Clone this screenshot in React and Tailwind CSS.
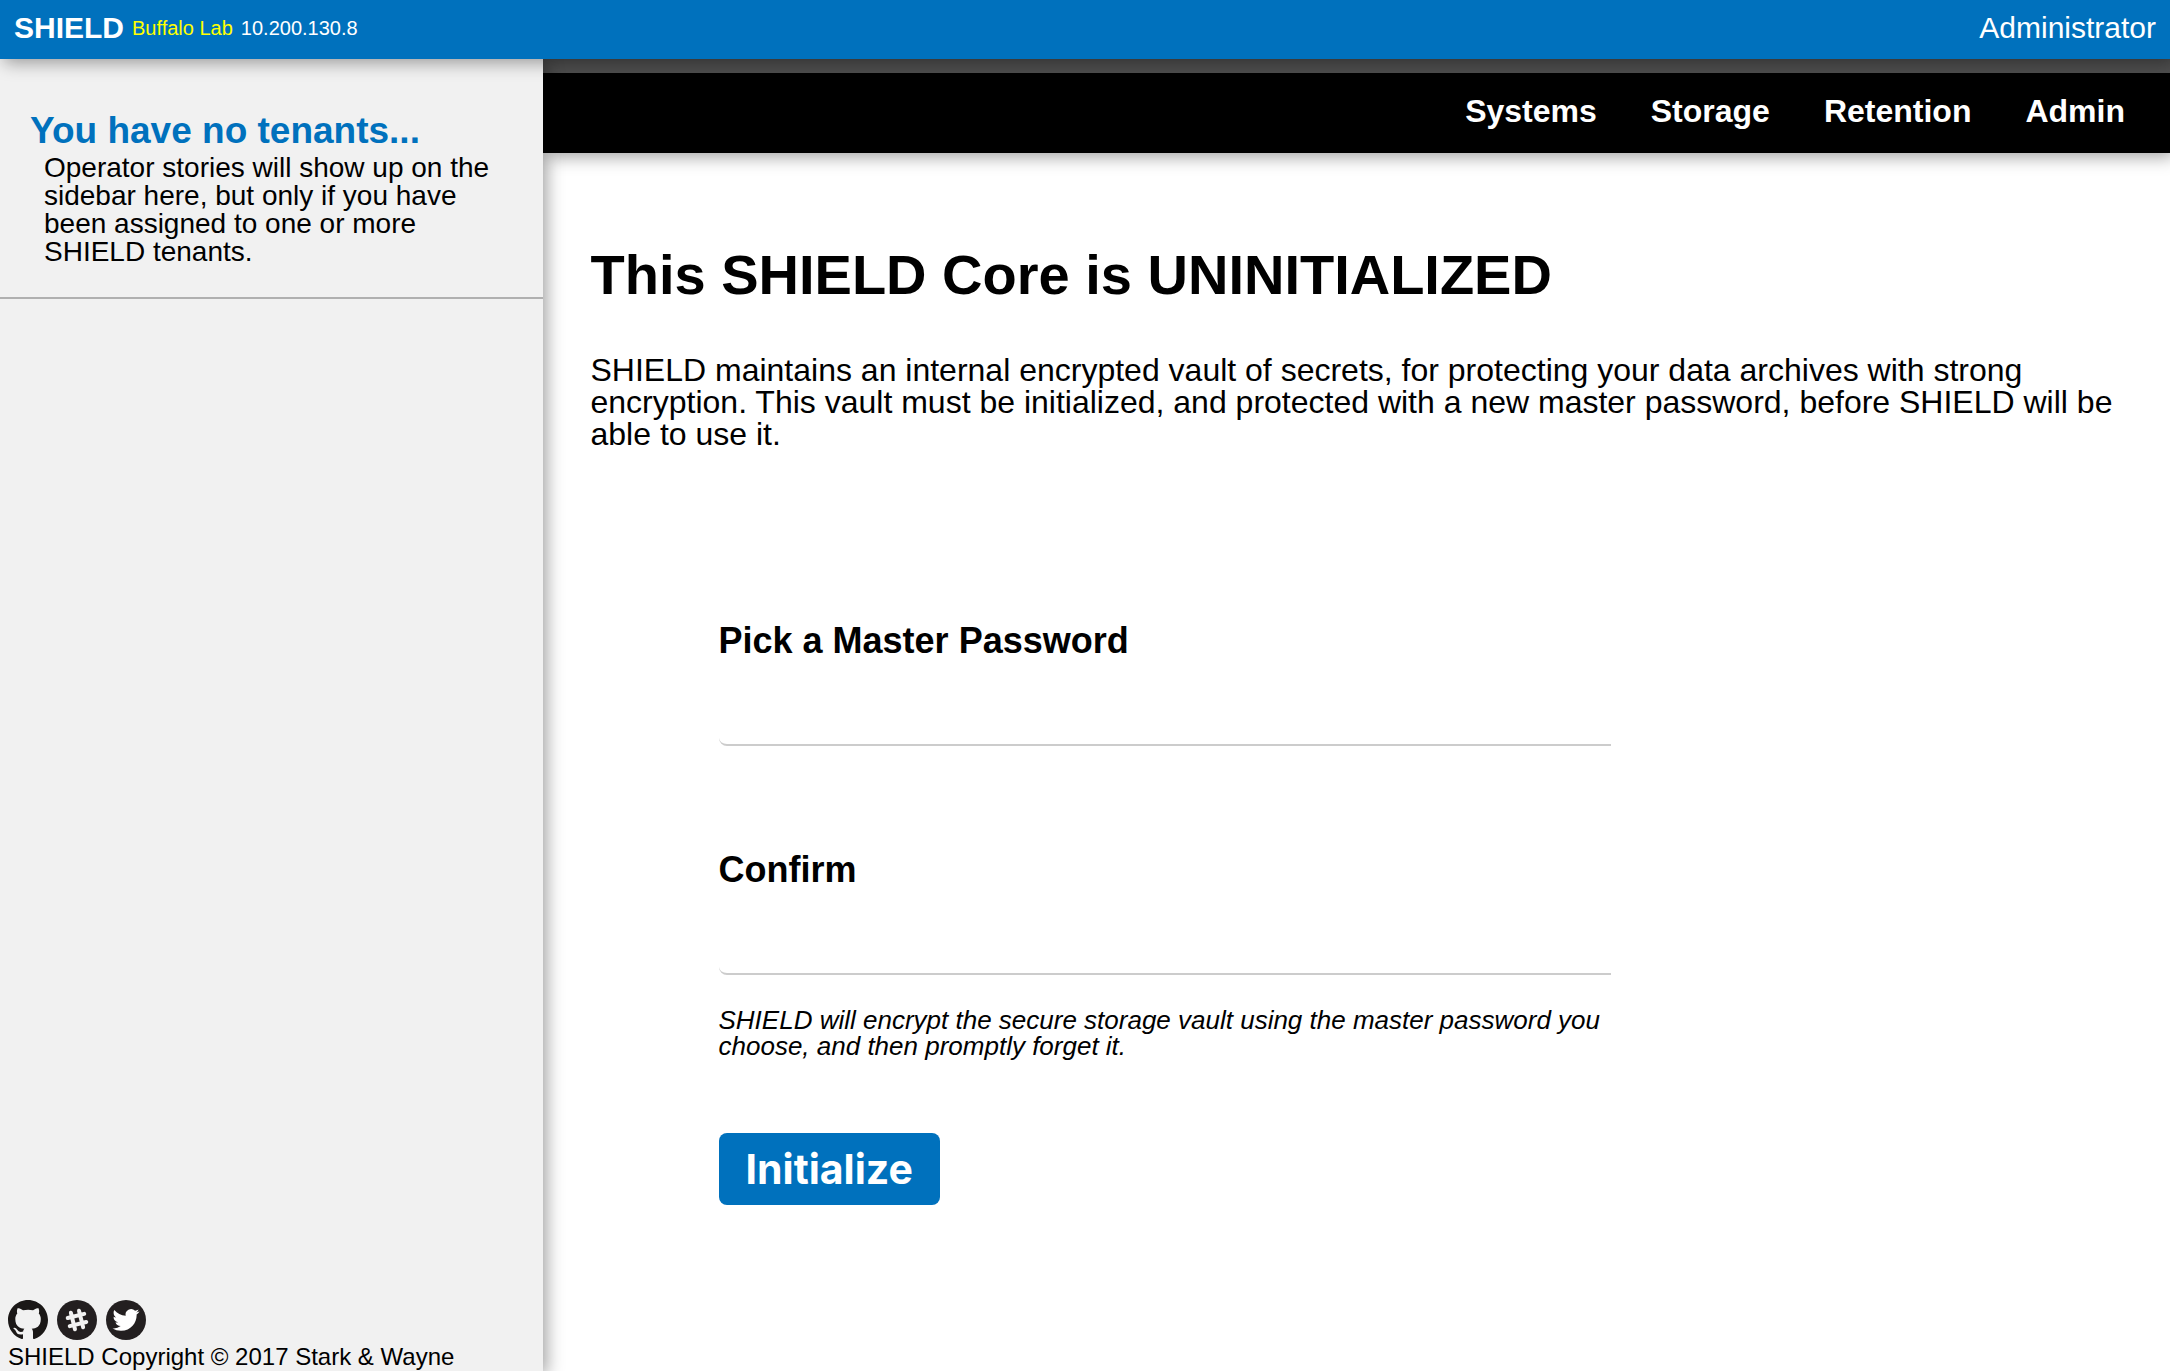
const NAV = ["Systems", "Storage", "Retention", "Admin"];

function GithubIcon() {
  return (
    <svg viewBox="0 0 16 16" className="size-10" aria-hidden="true">
      <path
        fill="#1b1817"
        d="M8 0C3.58 0 0 3.58 0 8c0 3.54 2.29 6.53 5.47 7.59.4.07.55-.17.55-.38 0-.19-.01-.82-.01-1.49-2.01.37-2.53-.49-2.69-.94-.09-.23-.48-.94-.82-1.13-.28-.15-.68-.52-.01-.53.63-.01 1.08.58 1.23.82.72 1.21 1.87.87 2.33.66.07-.52.28-.87.51-1.07-1.78-.2-3.64-.89-3.64-3.95 0-.87.31-1.59.82-2.15-.08-.2-.36-1.02.08-2.12 0 0 .67-.21 2.2.82a7.6 7.6 0 0 1 4 0c1.53-1.04 2.2-.82 2.2-.82.44 1.1.16 1.92.08 2.12.51.56.82 1.27.82 2.15 0 3.07-1.87 3.75-3.65 3.95.29.25.54.73.54 1.48 0 1.07-.01 1.93-.01 2.2 0 .21.15.46.55.38A8.01 8.01 0 0 0 16 8c0-4.42-3.58-8-8-8z"
      />
    </svg>
  );
}

function SlackIcon() {
  return (
    <svg viewBox="0 0 40 40" className="size-10" aria-hidden="true">
      <circle cx="20" cy="20" r="20" fill="#231f20" />
      <g transform="rotate(-14 20 20)" stroke="#f1f1f1" strokeWidth="4" strokeLinecap="round">
        <path d="M15.8 11.5v17M24.2 11.5v17M11.5 15.8h17M11.5 24.2h17" />
      </g>
    </svg>
  );
}

function TwitterIcon() {
  return (
    <svg viewBox="0 0 40 40" className="size-10" aria-hidden="true">
      <circle cx="20" cy="20" r="20" fill="#231f20" />
      <path
        transform="translate(6.5 6.5) scale(1.12)"
        fill="#fff"
        d="M23.953 4.57a10 10 0 01-2.825.775 4.958 4.958 0 002.163-2.723c-.951.555-2.005.959-3.127 1.184a4.92 4.92 0 00-8.384 4.482C7.69 8.095 4.067 6.13 1.64 3.162a4.822 4.822 0 00-.666 2.475c0 1.71.87 3.213 2.188 4.096a4.904 4.904 0 01-2.228-.616v.06a4.923 4.923 0 003.946 4.827 4.996 4.996 0 01-2.212.085 4.936 4.936 0 004.604 3.417 9.867 9.867 0 01-6.102 2.105c-.39 0-.779-.023-1.17-.067a13.995 13.995 0 007.557 2.209c9.053 0 13.998-7.496 13.998-13.985 0-.21 0-.42-.015-.63A9.935 9.935 0 0024 4.59z"
      />
    </svg>
  );
}

function Field({ id, label, children }) {
  return (
    <div>
      <label htmlFor={id} className="block text-[36px]/[36px] font-bold">
        {label}
      </label>
      <input
        id={id}
        type="password"
        className="mt-5 block h-[67px] w-full rounded-bl-lg border-b-2 border-[#ccc] bg-transparent px-2 text-[32px] outline-none"
      />
      {children}
    </div>
  );
}

export default function App() {
  return (
    <div className="flex min-h-screen flex-col bg-white font-['Liberation_Sans',Arial,sans-serif] text-black">
      <header className="relative z-20 flex h-[59px] items-center justify-between bg-[#0071bd] px-3.5 pb-1 text-white shadow-[4px_4px_16px_rgba(0,0,0,0.36)]">
        <div className="flex items-center gap-2 text-[20px]/[20px]">
          <strong className="text-[30px]/[30px]">SHIELD</strong>
          <span className="text-[#ff0]">Buffalo Lab</span>
          <span>10.200.130.8</span>
        </div>
        <a href="#account" className="text-[30px]/[30px]">
          Administrator
        </a>
      </header>

      <div className="flex flex-1">
        <aside className="relative z-10 flex w-1/4 shrink-0 flex-col justify-between bg-[#f1f1f1] shadow-[4px_4px_16px_rgba(0,0,0,0.36)]">
          <section className="border-b-2 border-[#b0b0b0] pt-[53px] pr-10 pb-[31px] pl-[30px]">
            <h2 className="text-[37px]/[37px] font-bold text-[#0071bd]">You have no tenants...</h2>
            <p className="pt-[5px] pl-3.5 text-[28px]/[28px]">
              Operator stories will show up on the sidebar here, but only if you have been assigned to one or more
              SHIELD tenants.
            </p>
          </section>
          <footer className="px-2 pb-0.5">
            <div className="flex gap-[9px]">
              <a href="#github" aria-label="GitHub">
                <GithubIcon />
              </a>
              <a href="#slack" aria-label="Slack">
                <SlackIcon />
              </a>
              <a href="#twitter" aria-label="Twitter">
                <TwitterIcon />
              </a>
            </div>
            <p className="pt-[5px] text-[24px]/[24px]">SHIELD Copyright © 2017 Stark &amp; Wayne</p>
          </footer>
        </aside>

        <div className="min-w-0 flex-1">
          <nav className="flex h-[94px] items-center justify-end gap-[54px] border-t-[14px] border-[#4e4e4e] bg-black pr-[45px] pb-1 text-[32px]/[32px] font-bold text-white shadow-[4px_4px_16px_rgba(0,0,0,0.36)]">
            {NAV.map((item) => (
              <a key={item} href={`#${item.toLowerCase()}`}>
                {item}
              </a>
            ))}
          </nav>

          <main className="px-12 pt-[94px]">
            <h1 className="text-[56px]/[56px] font-bold">This SHIELD Core is UNINITIALIZED</h1>
            <p className="pt-[51px] text-[32px]/[32px]">
              SHIELD maintains an internal encrypted vault of secrets, for protecting your data archives with strong
              encryption. This vault must be initialized, and protected with a new master password, before SHIELD will
              be able to use it.
            </p>

            <form className="mx-32 mt-[173px] max-w-[892px]">
              <div className="flex flex-col gap-[106px]">
                <Field id="password" label="Pick a Master Password" />
                <Field id="confirm" label="Confirm">
                  <p className="pt-8 text-[26px]/[26px] italic">
                    SHIELD will encrypt the secure storage vault using the master password you choose, and then
                    promptly forget it.
                  </p>
                </Field>
              </div>
              <button
                type="button"
                className="mt-[74px] h-[72px] rounded-lg bg-[#0071bd] px-[27px] font-['Inter',sans-serif] text-[41px]/[42px] font-bold text-white"
              >
                Initialize
              </button>
            </form>
          </main>
        </div>
      </div>
    </div>
  );
}
